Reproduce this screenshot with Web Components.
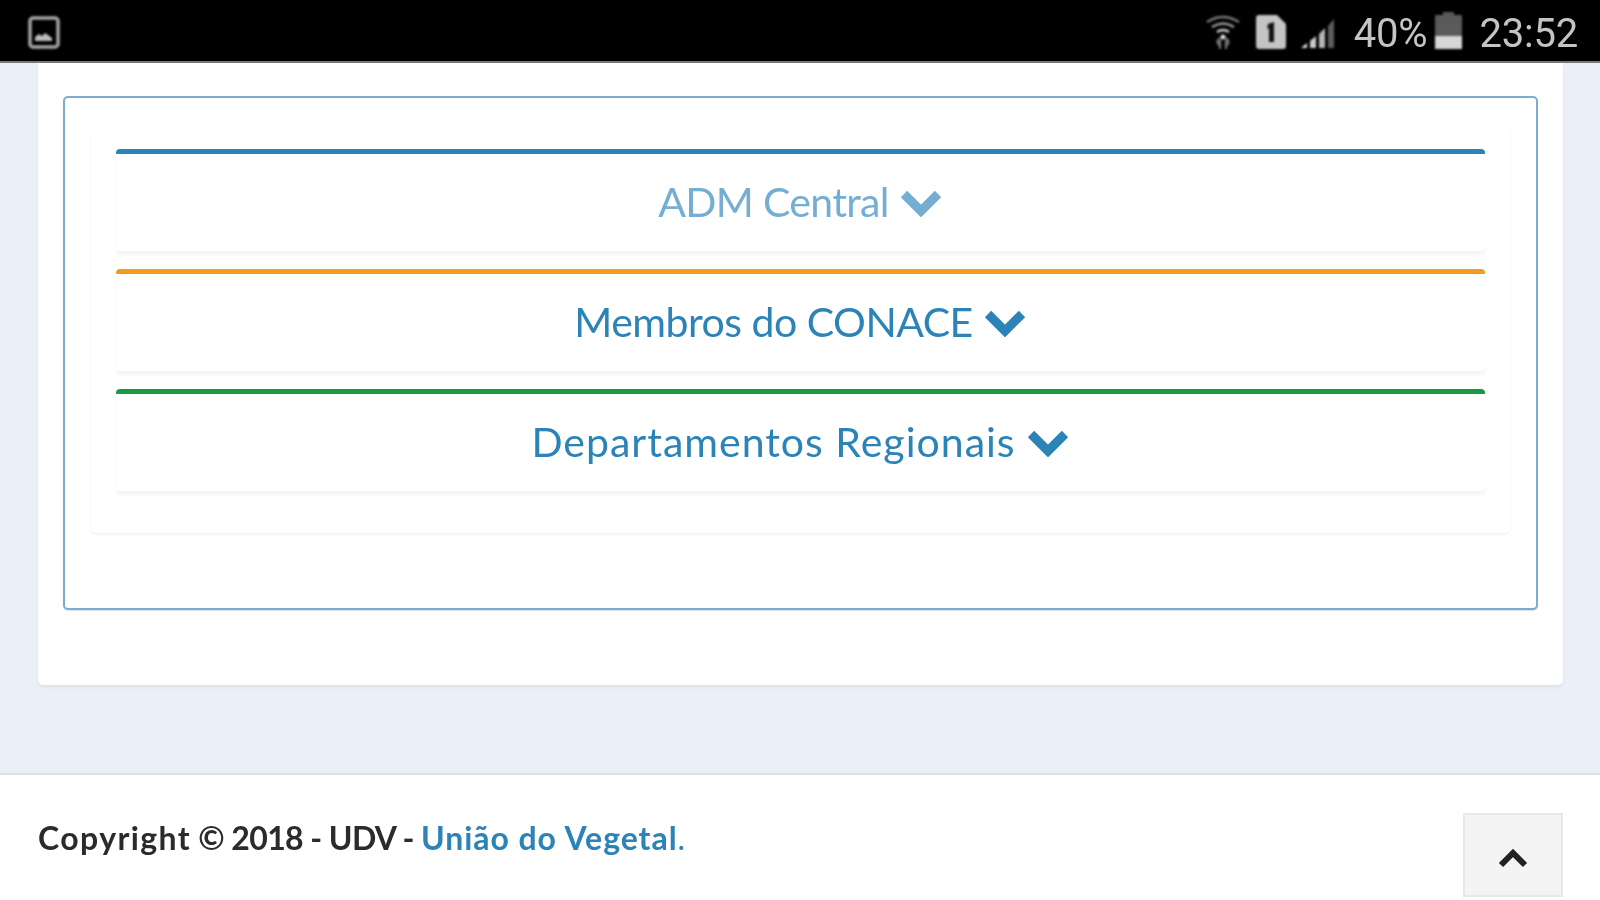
<!DOCTYPE html>
<html lang="pt"><head><meta charset="utf-8"><title>UDV</title>
<style>
html,body{margin:0;height:100%;background:#ebeff7;overflow:hidden}
body{display:flex;flex-direction:column;height:900px;font-family:"Lato","Noto Sans",sans-serif}
</style></head><body>
<status-bar></status-bar>
<page-main>
  <outer-card>
    <blue-frame>
      <inner-panel>
        <acc-item color="#2a82bd" dim style="--ls:-.7px">ADM Central</acc-item>
        <acc-item color="#f39a1f">Membros do CONACE</acc-item>
        <acc-item color="#169a45" style="--ls:1px">Departamentos Regionais</acc-item>
      </inner-panel>
    </blue-frame>
  </outer-card>
</page-main>
<site-footer></site-footer>
<script>
function def(name,html,init){customElements.define(name,class extends HTMLElement{
  constructor(){super();this.attachShadow({mode:'open'}).innerHTML=html;}
  connectedCallback(){if(init)init(this);}
});}
def('status-bar',`<style>
:host{display:flex;flex:none;height:61px;background:#000;border-bottom:2px solid #777;align-items:center;padding:0 22px 0 28px;color:#c4c4c4;font:400 40px Roboto,sans-serif;box-sizing:content-box}
svg{display:block;filter:blur(.8px);margin-top:3px}
.sp{flex:1}
span{filter:blur(.7px);line-height:1;letter-spacing:-.2px;margin-top:7px}
</style>
<svg width="32" height="33" viewBox="0 0 32 33"><rect x="2" y="2" width="28" height="29" rx="3" fill="none" stroke="#a5a5a5" stroke-width="3.5"/><path d="M7 25v-4l4-3 3 2 3-3 3 2 4 3v3z" fill="#bbb"/></svg>
<div class="sp"></div>
<svg width="36" height="36" viewBox="0 0 36 36" style="margin-right:15px"><g fill="none" stroke="#888" stroke-width="2.5"><path d="M2 8Q18-2 34 8" stroke="#777"/><path d="M7 13Q18 6 29 13" stroke="#999"/><path d="M12 18Q18 14 24 18" stroke="#ccc"/></g><circle cx="18" cy="23" r="2.5" fill="#ddd"/><path d="M12 28l3-4M12 28l3 4M24 28l-3-4M24 28l-3 4M15 26v9M21 26v9" stroke="#777" stroke-width="2.2" fill="none"/></svg>
<svg width="31" height="34" viewBox="0 0 31 34" style="margin-right:14px"><path d="M3 0H21L30 9V31a3 3 0 0 1-3 3H3a3 3 0 0 1-3-3V3a3 3 0 0 1 3-3z" fill="#c4c4c4"/><path d="M12 9l6-2V27H13V13l-2 1z" fill="#111"/></svg>
<svg width="35" height="34" viewBox="0 0 35 34" style="margin-right:18px"><path d="M0 33l6-5v5z" fill="#ddd"/><path d="M9 33V26l6-5V33z" fill="#ccc"/><path d="M18 33V19l6-6V33z" fill="#b5b5b5"/><path d="M27 33V11l6-7V33z" fill="#5c5c5c"/></svg>
<span>40%</span>
<svg width="27" height="37" viewBox="0 0 27 37" style="margin:-1px 17px 0 8px"><rect x="8" y="0" width="11" height="4" fill="#555"/><rect x="0" y="3" width="27" height="21" fill="#5a5a5a"/><rect x="0" y="24" width="27" height="13" fill="#d6d6d6"/></svg>
<span>23:52</span>`);
def('page-main',`<style>:host{display:block;flex:1;min-height:0;padding:0 37px 0 38px}</style><slot></slot>`);
def('outer-card',`<style>:host{display:block;box-sizing:border-box;height:622px;background:#fff;padding:33px 25px 0;border-radius:0 0 5px 5px;box-shadow:0 3px 3px rgba(0,0,0,.04),0 0 3px rgba(0,0,0,.03)}</style><slot></slot>`);
def('blue-frame',`<style>:host{display:block;box-sizing:border-box;height:514px;border:2px solid #7fabcf;border-radius:5px;padding:28px 26px 0;background:#fff;box-shadow:0 1px 1px rgba(60,100,140,.2)}</style><slot></slot>`);
def('inner-panel',`<style>:host{display:flex;flex-direction:column;gap:18px;box-sizing:border-box;height:407px;padding:23px 25px 0;border-radius:5px;box-shadow:0 2px 3px rgba(0,0,0,.05),0 0 2px rgba(0,0,0,.02)}</style><slot></slot>`);
def('acc-item',`<style>
:host{display:flex;align-items:center;justify-content:center;gap:10px;box-sizing:border-box;height:102px;border-top:5px solid var(--c);border-radius:4px;box-shadow:0 4px 3px rgba(0,0,0,.045);color:#2b83b8;font:400 41px Lato,sans-serif;padding-bottom:3px}
:host([dim]){color:#75aed2}
.t{filter:blur(.6px);letter-spacing:var(--ls,-.5px);white-space:nowrap}
svg{display:block;filter:blur(.5px);margin-top:2px}
</style><span class="t"><slot></slot></span><svg width="44" height="30" viewBox="0 0 44 30"><path d="M5 7 22 24 39 7" fill="none" stroke="currentColor" stroke-width="9"/></svg>`,
 el=>{el.style.setProperty('--c',el.getAttribute('color'))});
def('site-footer',`<style>
:host{display:flex;flex:none;box-sizing:border-box;height:127px;background:#fff;border-top:2px solid #dcdfe5;padding:38px 37px 3px 38px;color:#2b2b2b;font:700 32px Lato,sans-serif}
.t{flex:1;filter:blur(.7px);padding-top:5px;line-height:40px;white-space:nowrap;letter-spacing:-.6px}
.c{letter-spacing:1.4px}
a{color:#2b83b8;text-decoration:none;letter-spacing:.95px}
.b{width:100px;height:84px;background:#f4f4f4;border:2px solid #e8e8e8;box-sizing:border-box;display:flex;align-items:center;justify-content:center}
svg{display:block;filter:blur(.7px);margin-top:6px}
</style><div class="t"><span class="c">Copyright</span> © 2018 - UDV - <a href="#">União do Vegetal</a><a href="#" style="font-weight:400">.</a></div>
<div class="b"><svg width="32" height="22" viewBox="0 0 32 22"><path d="M4 18 16 6 28 18" fill="none" stroke="#222" stroke-width="6"/></svg></div>`);
</script>
</body></html>
